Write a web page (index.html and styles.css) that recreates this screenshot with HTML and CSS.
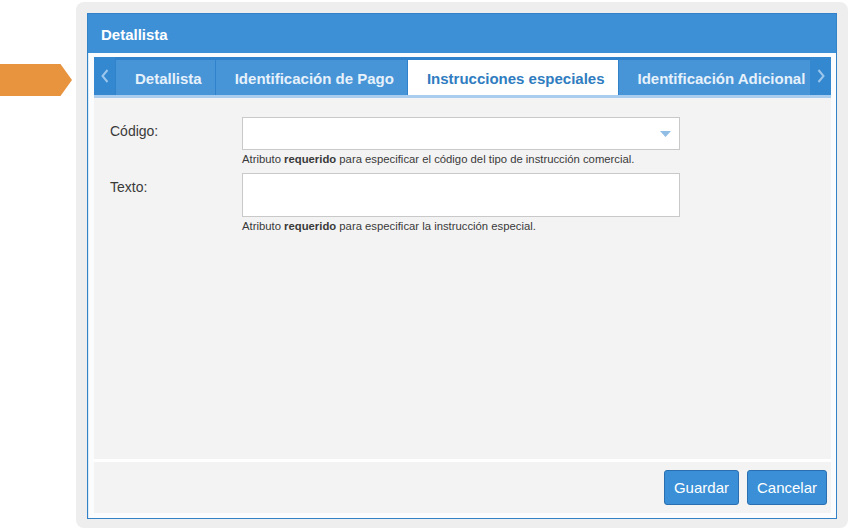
FILE: index.html
```html
<!DOCTYPE html>
<html lang="es">
<head>
	<meta charset="UTF-8">
	<title>Detallista</title>
	<link rel="stylesheet" href="styles.css">
</head>
<body>
	<div class="stage">
		<div class="marker"></div>
		<div class="frame">
			<div class="dialog">
				<div class="dialog-title">Detallista</div>
				<div class="dialog-body">
					<div class="tabstrip">
						<span class="tab-nav">
							<svg width="8" height="14" viewBox="0 0 8 14"><path d="M6.5 1 L1.5 7 L6.5 13" fill="none" stroke="#9cc6ec" stroke-width="2"/></svg>
						</span>
						<div class="tabs">
							<span class="tab">Detallista</span>
							<span class="tab">Identificación de Pago</span>
							<span class="tab active">Instrucciones especiales</span>
							<span class="tab">Identificación Adicional</span>
						</div>
						<span class="tab-nav">
							<svg width="8" height="14" viewBox="0 0 8 14"><path d="M1.5 1 L6.5 7 L1.5 13" fill="none" stroke="#9cc6ec" stroke-width="2"/></svg>
						</span>
					</div>
					<div class="panel">
						<div class="row">
							<label>Código:</label>
							<div class="field">
								<div class="select">
									<svg width="11" height="6" viewBox="0 0 11 6"><path d="M0 0 L11 0 L5.5 6 Z" fill="#8fbde3"/></svg>
								</div>
								<div class="hint">Atributo <b>requerido</b> para especificar el código del tipo de instrucción comercial.</div>
							</div>
						</div>
						<div class="row">
							<label>Texto:</label>
							<div class="field">
								<textarea></textarea>
								<div class="hint">Atributo <b>requerido</b> para especificar la instrucción especial.</div>
							</div>
						</div>
					</div>
					<div class="footer">
						<button class="btn">Guardar</button>
						<button class="btn">Cancelar</button>
					</div>
				</div>
			</div>
		</div>
	</div>
</body>
</html>
```

FILE: styles.css
```css
body{
	margin: 0;
	padding: 0;
	background-color: #FFFFFF;
	font-family: "Liberation Sans", Arial, sans-serif;
	font-size: 14px;
	color: #333;
}

.stage{
	display: flex;
	align-items: flex-start;
	gap: 4px;
}

.marker{
	width: 72px;
	height: 32px;
	margin-top: 64px;
	background-color: #E8943F;
	clip-path: polygon(0 0, 84% 0, 100% 50%, 84% 100%, 0 100%);
}

.frame{
	width: 750px;
	height: 506px;
	margin-top: 2px;
	padding: 11px 11px 9px 11px;
	background-color: #EEEEEE;
	border-radius: 8px;
}

.dialog{
	height: 504px;
	border: 1px solid #3381C7;
	background-color: #FFFFFF;
	display: flex;
	flex-direction: column;
}

.dialog-title{
	height: 39px;
	line-height: 41px;
	padding-left: 13px;
	background-color: #3D8FD6;
	color: #FFFFFF;
	font-weight: bold;
	font-size: 15px;
}

.dialog-body{
	flex: 1;
	display: flex;
	flex-direction: column;
	padding: 4px 5px 5px 5px;
	background-color: #FAFCFE;
	border-left: 1px solid #DCEBF8;
}

.tabstrip{
	display: flex;
	height: 38px;
	background-color: #2F82CB;
	border-bottom: 3px solid #A9CDEE;
}

.tab-nav{
	width: 21px;
	display: flex;
	align-items: center;
	justify-content: center;
	background-color: #3388D0;
	flex-shrink: 0;
}

.tabs{
	flex: 1;
	display: flex;
	align-items: flex-end;
	overflow: hidden;
	padding-left: 1px;
}

.tab{
	height: 35px;
	line-height: 38px;
	padding: 0 13px 0 19px;
	margin-right: 1px;
	background-color: #4795D7;
	color: #E6F1FB;
	font-weight: bold;
	font-size: 15px;
	white-space: nowrap;
	flex-shrink: 0;
}

.tab.active{
	background-color: #FFFFFF;
	color: #2F7CC0;
}

.panel{
	flex: 1;
	background-color: #F3F3F3;
	padding: 19px 16px;
	border-bottom: 3px solid #FFFFFF;
}

.row{
	display: flex;
}

.row label{
	width: 132px;
	padding-top: 6px;
	font-size: 14px;
	color: #3A3A3A;
}

.field{
	width: 438px;
}

.select{
	height: 31px;
	border: 1px solid #C9C9C9;
	background-color: #FFFFFF;
	display: flex;
	align-items: center;
	justify-content: flex-end;
	padding-right: 8px;
}

textarea{
	display: block;
	box-sizing: border-box;
	width: 438px;
	height: 44px;
	margin: 0;
	border: 1px solid #C9C9C9;
	resize: none;
	background-color: #FFFFFF;
}

.hint{
	font-size: 11.3px;
	color: #3A3A3A;
	margin-top: 3px;
	height: 20px;
}

.footer{
	height: 51px;
	background-color: #F3F3F3;
	display: flex;
	justify-content: flex-end;
	align-items: center;
	gap: 8px;
	padding-right: 4px;
}

.btn{
	height: 35px;
	padding: 0 9px;
	background-color: #3A8FD6;
	border: 1px solid #2A70B0;
	border-radius: 3px;
	color: #FFFFFF;
	font-family: "Liberation Sans", Arial, sans-serif;
	font-size: 15px;
}
```
